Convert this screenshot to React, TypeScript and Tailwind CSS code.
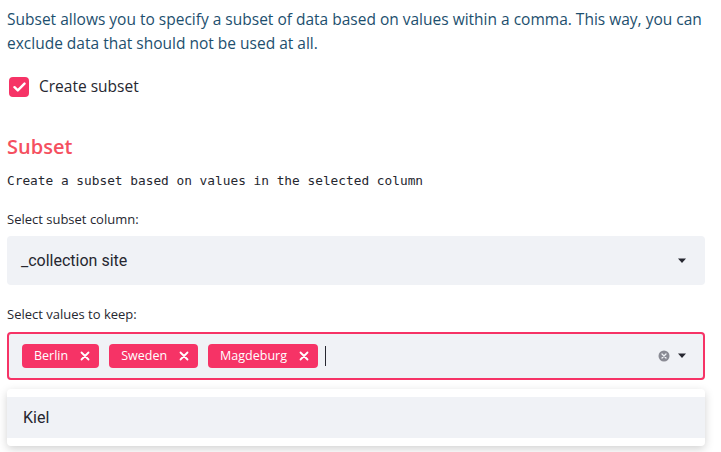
import React from 'react';

const Caret = () => (
  <svg width="10" height="6" viewBox="0 0 10 6" className="shrink-0">
    <path d="M1 0.5h8L5 5z" fill="#262730" />
  </svg>
);

const tags = ['Berlin', 'Sweden', 'Magdeburg'];

export default function App() {
  return (
    <div className="w-[721px] h-[452px] bg-white overflow-hidden pl-[7px] pr-[16px] font-['Open_Sans',sans-serif]">
      {/* Intro */}
      <p className="pt-[7px] text-[15.5px] leading-[24px] text-[#1d4f6e]">
        Subset allows you to specify a subset of data based on values within a comma. This way, you can
        exclude data that should not be used at all.
      </p>

      <label className="mt-[20px] flex items-center gap-[10px] pl-[2px]">
        <span className="flex h-[20px] w-[20px] items-center justify-center rounded-[4px] bg-[#f63366]">
          <svg width="13" height="10" viewBox="0 0 13 10">
            <path d="M1.5 5.2l3.3 3.2L11.5 1.6" fill="none" stroke="white" strokeWidth="2.4" strokeLinecap="round" strokeLinejoin="round" />
          </svg>
        </span>
        <span className="text-[15.5px] text-[#262730]">Create subset</span>
      </label>

      {/* Subset section */}
      <h2 className="mt-[35px] text-[20px] font-semibold leading-[28px] text-[#f5505f]">Subset</h2>
      <p className="mt-[11px] font-['DejaVu_Sans_Mono',monospace] text-[12.8px] leading-[18px] text-[#262730]">
        Create a subset based on values in the selected column
      </p>

      <div className="mt-[20px] text-[13px] leading-[18px] text-[#262730]">Select subset column:</div>
      <div className="mt-[8px] flex h-[49px] items-center justify-between rounded-[4px] bg-[#f0f2f6] pl-[14px] pr-[18px]">
        <span className="font-['Roboto',sans-serif] text-[16px] text-[#262730]">_collection site</span>
        <Caret />
      </div>

      <div className="mt-[20px] text-[13px] leading-[18px] text-[#262730]">Select values to keep:</div>
      <div className="mt-[9px] flex h-[48px] items-center rounded-[4px] border-2 border-[#f63366] bg-[#f0f2f6] pl-[13px] pr-[16px]">
        <div className="flex flex-1 items-center gap-[10px]">
          {tags.map((t) => (
            <span
              key={t}
              className="flex h-[24px] items-center gap-[12px] rounded-[4px] bg-[#f63366] pl-[12px] pr-[9px] text-[12.5px] font-medium text-white"
            >
              {t}
              <svg width="10" height="10" viewBox="0 0 10 10">
                <path d="M1.5 1.5l7 7M8.5 1.5l-7 7" stroke="white" strokeWidth="1.8" strokeLinecap="round" />
              </svg>
            </span>
          ))}
          <span className="ml-[-3px] h-[20px] w-[1px] bg-[#262730]" />
        </div>
        <div className="flex items-center gap-[7px]">
          <svg width="12" height="12" viewBox="0 0 12 12">
            <circle cx="6" cy="6" r="5.5" fill="#8a8b94" />
            <path d="M4 4l4 4M8 4l-4 4" stroke="#f0f2f6" strokeWidth="1.3" strokeLinecap="round" />
          </svg>
          <Caret />
        </div>
      </div>

      {/* Dropdown */}
      <div className="mt-[9px] rounded-[4px] bg-white py-[8px] shadow-[0_3px_10px_rgba(0,0,0,0.18)]">
        <div className="flex h-[41px] items-center bg-[#f0f2f6] pl-[16px] font-['Roboto',sans-serif] text-[16px] text-[#262730]">
          Kiel
        </div>
      </div>
    </div>
  );
}
